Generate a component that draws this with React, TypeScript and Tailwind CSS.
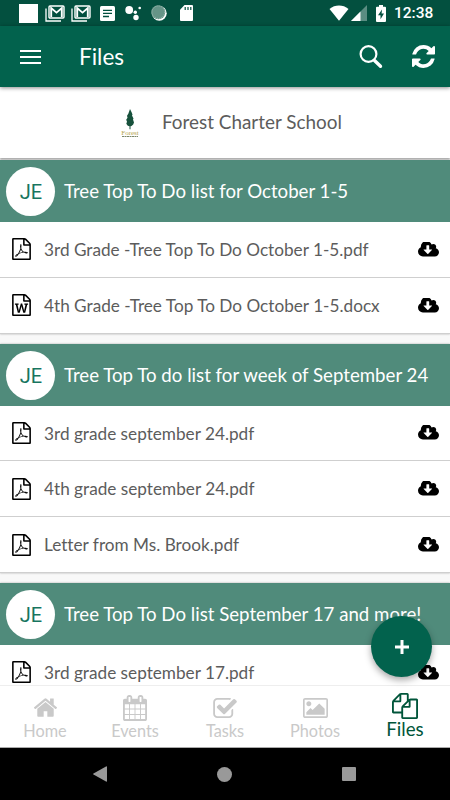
import type { ReactNode } from 'react'

type FileKind = 'pdf' | 'word'

type FileItem = {
  name: string
  kind: FileKind
}

type FileGroup = {
  title: string
  initials: string
  files: FileItem[]
}

const groups: FileGroup[] = [
  {
    title: 'Tree Top To Do list for October 1-5',
    initials: 'JE',
    files: [
      { name: '3rd Grade -Tree Top To Do October 1-5.pdf', kind: 'pdf' },
      { name: '4th Grade -Tree Top To Do October 1-5.docx', kind: 'word' },
    ],
  },
  {
    title: 'Tree Top To do list for week of September 24',
    initials: 'JE',
    files: [
      { name: '3rd grade september 24.pdf', kind: 'pdf' },
      { name: '4th grade september 24.pdf', kind: 'pdf' },
      { name: 'Letter from Ms. Brook.pdf', kind: 'pdf' },
    ],
  },
  {
    title: 'Tree Top To Do list September 17 and more!',
    initials: 'JE',
    files: [{ name: '3rd grade september 17.pdf', kind: 'pdf' }],
  },
]

const PAGE_OUTLINE =
  'M1596 380q28 28 48 76t20 88v1152q0 40-28 68t-68 28h-1344q-40 0-68-28t-28-68v-1600q0-40 28-68t68-28h896q40 0 88 20t76 48zm-444-244v376h376q-10-29-22-41l-313-313q-12-12-41-22zm384 1528v-1024h-416q-40 0-68-28t-28-68v-416h-768v1536h1280z'

const paths = {
  pdf:
    PAGE_OUTLINE +
    'm-514-593q33 26 84 56 59-7 117-7 147 0 177 49 16 22 2 52 0 1-1 2l-2 2v1q-6 38-71 38-48 0-115-20t-130-53q-221 24-392 83-153 262-242 262-15 0-28-7l-24-12q-1-1-6-5-10-10-6-36 9-40 56-91.5t132-96.5q14-9 23 6 2 2 2 4 52-85 107-197 68-136 104-262-24-82-30.5-159.5t6.5-127.5q11-40 42-40h22q23 0 35 15 18 21 9 68-2 6-4 8 1 3 1 8v30q-2 123-14 192 55 164 146 238zm-576 411q52-24 137-158-51 40-87.5 84t-49.5 74zm398-920q-15 42-2 132 1-7 7-44 0-3 7-43 1-4 4-8-1-1-1-2-1-2-1-3-1-22-13-36 0 1-1 2v2zm-124 661q135-54 284-81-2-1-13-9.5t-16-13.5q-76-67-127-176-27 86-83 197-30 56-45 83zm646-16q-24-24-140-24 76 28 124 28 14 0 18-1 0-1-2-3z',
  word:
    PAGE_OUTLINE +
    'm-1175-896v107h70l164 661h159l128-485q7-20 10-46 2-16 2-24h4l3 24q1 3 3.5 20t5.5 26l128 485h159l164-661h70v-107h-300v107h90l-99 438q-5 20-7 46l-2 21h-4l-3-21q-1-5-4-21t-5-25l-144-545h-114l-144 545q-2 9-4.5 24.5t-3.5 21.5l-4 21h-4l-2-21q-2-26-7-46l-99-438h90v-107h-300z',
  cloud:
    'M1280 928q0-14-9-23t-23-9h-224v-352q0-13-9.5-22.5t-22.5-9.5h-192q-13 0-22.5 9.5t-9.5 22.5v352h-224q-13 0-22.5 9.5t-9.5 22.5q0 14 9 23l352 352q9 9 23 9t23-9l351-351q10-12 10-24zm640 224q0 159-112.5 271.5t-271.5 112.5h-1088q-185 0-316.5-131.5t-131.5-316.5q0-130 70-240t188-165q-2-30-2-43 0-212 150-362t362-150q156 0 285.5 87t188.5 231q71-62 166-62 106 0 181 75t75 181q0 76-41 138 130 31 213.5 135.5t83.5 238.5z',
  refresh:
    'M1639 1056q0 5-1 7-64 268-268 434.5t-478 166.5q-146 0-282.5-55t-243.5-157l-129 129q-19 19-45 19t-45-19-19-45v-448q0-26 19-45t45-19h448q26 0 45 19t19 45-19 45l-137 137q71 66 161 102t187 36q134 0 250-65t186-179q11-17 53-117 8-23 30-23h192q13 0 22.5 9.5t9.5 22.5zm25-800v448q0 26-19 45t-45 19h-448q-26 0-45-19t-19-45 19-45l138-138q-148-137-349-137-134 0-250 65t-186 179q-11 17-53 117-8 23-30 23h-199q-13 0-22.5-9.5t-9.5-22.5v-7q65-268 270-434.5t480-166.5q146 0 284 55.5t245 156.5l130-129q19-19 45-19t45 19 19 45z',
  home:
    'M1472 992v480q0 26-19 45t-45 19h-384v-384h-256v384h-384q-26 0-45-19t-19-45v-480q0-1 .5-3t.5-3l575-474 575 474q1 2 1 6zm223-69l-62 74q-8 9-21 11h-3q-13 0-21-7l-692-577-692 577q-12 8-24 7-13-2-21-11l-62-74q-8-10-7-23.5t11-21.5l719-599q32-26 76-26t76 26l244 204v-195q0-14 9-23t23-9h192q14 0 23 9t9 23v408l219 182q10 8 11 21.5t-7 23.5z',
  calendar:
    'M192 1664h288v-288h-288v288zm352 0h320v-288h-320v288zm-352-352h288v-320h-288v320zm352 0h320v-320h-320v320zm-352-384h288v-288h-288v288zm736 736h320v-288h-320v288zm-384-736h320v-288h-320v288zm768 736h288v-288h-288v288zm-384-352h320v-320h-320v320zm-352-864v-288q0-13-9.5-22.5t-22.5-9.5h-64q-13 0-22.5 9.5t-9.5 22.5v288q0 13 9.5 22.5t22.5 9.5h64q13 0 22.5-9.5t9.5-22.5zm736 864h288v-320h-288v320zm-384-384h320v-288h-320v288zm384 0h288v-288h-288v288zm32-480v-288q0-13-9.5-22.5t-22.5-9.5h-64q-13 0-22.5 9.5t-9.5 22.5v288q0 13 9.5 22.5t22.5 9.5h64q13 0 22.5-9.5t9.5-22.5zm384-64v1280q0 52-38 90t-90 38h-1408q-52 0-90-38t-38-90v-1280q0-52 38-90t90-38h128v-96q0-66 47-113t113-47h64q66 0 113 47t47 113v96h384v-96q0-66 47-113t113-47h64q66 0 113 47t47 113v96h128q52 0 90 38t38 90z',
  check:
    'M1472 930v318q0 119-84.5 203.5t-203.5 84.5h-832q-119 0-203.5-84.5t-84.5-203.5v-832q0-119 84.5-203.5t203.5-84.5h832q63 0 117 25 15 7 18 23 3 17-9 29l-49 49q-10 10-23 10-3 0-9-2-23-6-45-6h-832q-66 0-113 47t-47 113v832q0 66 47 113t113 47h832q66 0 113-47t47-113v-254q0-13 9-22l64-64q10-10 23-10 6 0 12 3 20 8 20 29zm231-489l-814 814q-24 24-57 24t-57-24l-430-430q-24-24-24-57t24-57l110-110q24-24 57-24t57 24l263 263 647-647q24-24 57-24t57 24l110 110q24 24 24 57t-24 57z',
  photo:
    'M576 576q0 80-56 136t-136 56-136-56-56-136 56-136 136-56 136 56 56 136zm1024 384v448h-1408v-192l320-320 160 160 512-512zm96-704h-1600q-13 0-22.5 9.5t-9.5 22.5v1216q0 13 9.5 22.5t22.5 9.5h1600q13 0 22.5-9.5t9.5-22.5v-1216q0-13-9.5-22.5t-22.5-9.5zm160 32v1216q0 66-47 113t-113 47h-1600q-66 0-113-47t-47-113v-1216q0-66 47-113t113-47h1600q66 0 113 47t47 113z',
  files:
    'M1696 384q40 0 68 28t28 68v1216q0 40-28 68t-68 28h-960q-40 0-68-28t-28-68v-288h-544q-40 0-68-28t-28-68v-672q0-40 20-88t48-76l408-408q28-28 76-48t88-20h416q40 0 68 28t28 68v328q68-40 128-40h416zm-544 213l-299 299h299v-299zm-640-384l-299 299h299v-299zm196 647l316-316v-416h-384v416q0 40-28 68t-68 28h-416v640h512v-256q0-40 20-88t48-76zm956 804v-1152h-384v416q0 40-28 68t-68 28h-416v640h896z',
}

function Icon({ d, box = '0 0 1792 1792', className }: { d: string; box?: string; className: string }) {
  return (
    <svg viewBox={box} className={className} fill="currentColor">
      <path d={d} />
    </svg>
  )
}

function MailIcon() {
  return (
    <svg viewBox="0 0 20 17" className="h-[17px] w-5" fill="none" stroke="white">
      <path d="M1 3.5V16h15" strokeWidth="1.3" />
      <rect x="4" y="1" width="15" height="12" rx="1" strokeWidth="1.4" />
      <path d="M6.2 12V3l5.3 4.6L16.8 3v9" strokeWidth="1.9" />
    </svg>
  )
}

function StatusBar() {
  return (
    <div className="flex h-[26px] shrink-0 items-center bg-[#03503f] pl-[19px] text-white">
      <div className="size-[19px] bg-white" />
      <div className="ml-[7px]"><MailIcon /></div>
      <div className="ml-[6px]"><MailIcon /></div>
      <svg viewBox="0 0 15 15" className="ml-[9px] size-[15px]">
        <rect width="15" height="15" rx="1.5" fill="white" />
        <path d="M3 4.3h9M3 7.4h9M3 10.5h6" stroke="#03503f" strokeWidth="1.3" />
      </svg>
      <svg viewBox="0 0 16 16" className="ml-[10px] size-4" fill="white">
        <circle cx="4.2" cy="5" r="3.9" />
        <circle cx="10.3" cy="7.2" r="1.7" />
        <circle cx="14.7" cy="3" r="1.3" />
        <circle cx="11" cy="12.5" r="2.7" />
      </svg>
      <svg viewBox="0 0 16 16" className="ml-[10px] size-4">
        <circle cx="8.3" cy="8.3" r="7.4" fill="white" />
        <circle cx="7.3" cy="7.2" r="7" fill="#659487" />
        <circle cx="7.3" cy="7.2" r="6.3" fill="none" stroke="#a5c2b9" strokeWidth="1" strokeDasharray="1 1" />
      </svg>
      <svg viewBox="0 0 13 16" className="ml-[13px] h-4 w-[13px]">
        <path d="M4.5 0H12a1 1 0 0 1 1 1v14a1 1 0 0 1-1 1H1a1 1 0 0 1-1-1V4.8z" fill="white" />
        <path d="M5.2 2v3M8 2v3M10.8 2v3" stroke="#03503f" strokeWidth="1.2" />
      </svg>
      <svg viewBox="0 0 20 16" className="ml-[136px] h-4 w-5">
        <path d="M.5 4C6-.6 14-.6 19.5 4L10 15.8z" fill="white" />
      </svg>
      <svg viewBox="0 0 16 16" className="ml-[2px] size-4">
        <path d="M16 0v16H0z" fill="white" fillOpacity=".35" />
        <path d="M9.5 6.5V16H0z" fill="white" />
      </svg>
      <svg viewBox="0 0 10 17" className="ml-[9px] h-[17px] w-[10px]">
        <path d="M3 0h4v1.7h2q1 0 1 1V16q0 1-1 1H1q-1 0-1-1V2.7q0-1 1-1h2z" fill="white" />
        <path d="M6 4.5L2 10.3h2.5v4L8 8.5H5.6z" fill="#03503f" />
      </svg>
      <span className="ml-[8px] pt-[2px] font-[Roboto] text-[15.5px] font-medium leading-none">12:38</span>
    </div>
  )
}

function Header() {
  return (
    <header className="relative z-10 flex h-[61px] shrink-0 items-center bg-[#02624d] pl-5 pr-[15px] text-white shadow-[0_1px_4px_rgba(0,0,0,0.45)]">
      <div className="flex w-[21px] flex-col gap-[4px]">
        <div className="h-[2px] bg-white" />
        <div className="h-[2px] bg-white" />
        <div className="h-[2px] bg-white" />
      </div>
      <h1 className="ml-[38px] pt-px text-[22.5px]">Files</h1>
      <svg viewBox="0 0 24 24" className="ml-auto size-6" fill="none" stroke="white">
        <circle cx="9.5" cy="9" r="7.9" strokeWidth="2.2" />
        <path d="M15.5 15.5l6 5.8" strokeWidth="3.4" strokeLinecap="round" />
      </svg>
      <Icon d={paths.refresh} box="128 128 1536 1536" className="ml-[29px] size-[23px]" />
    </header>
  )
}

function SchoolLogo() {
  return (
    <svg viewBox="0 0 20 30" className="h-[30px] w-5 overflow-visible">
      <path d="M10 1l1.5 3 1 2.5-.5 1 1.5 3-.5 1 1 3-.8 2-1.7 1.5-1 .2v3H9.5v-3l-1.7-.5-1.5-2 .7-2-.8-2 1.3-2-.5-2 1.3-2z" fill="#17513c" />
      <text x="10" y="26.5" textAnchor="middle" className="font-['Liberation_Serif'] text-[7px]" fill="#b5a44d">Forest</text>
      <path d="M2 28.500h16" stroke="#7b8668" strokeWidth="1" strokeDasharray="2 .5" />
    </svg>
  )
}

function FileRow({ file }: { file: FileItem }) {
  return (
    <div className="flex h-[55.8px] items-center border-b border-[#cfcfcf] bg-white pl-3 pr-[11px]">
      <Icon d={paths[file.kind]} box="128 0 1536 1792" className="h-[22px] w-[19px] text-black" />
      <span className="ml-[13px] flex-1 whitespace-nowrap pt-px text-[17.2px] text-[#5c5c5c]">{file.name}</span>
      <Icon d={paths.cloud} box="0 256 1920 1280" className="h-[15px] w-[21px] text-black" />
    </div>
  )
}

function GroupCard({ group }: { group: FileGroup }) {
  return (
    <section className="mb-[10px] shadow-[0_0_2px_rgba(0,0,0,0.3)]">
      <div className="flex h-[62px] items-center bg-[#508b7b] pl-[6px]">
        <div className="mt-px flex size-[49px] items-center justify-center rounded-full bg-white pl-px pt-px font-[Roboto] text-[20px] text-[#187560]">
          {group.initials}
        </div>
        <h2 className="ml-[9px] whitespace-nowrap text-[18.67px] text-white">{group.title}</h2>
      </div>
      {group.files.map(file => (
        <FileRow key={file.name} file={file} />
      ))}
    </section>
  )
}

function Tab({ label, active, children }: { label: string; active?: boolean; children: ReactNode }) {
  return (
    <div className={`flex w-[90px] flex-col items-center ${active ? 'text-[#00553a]' : 'text-[#c9c9c9]'}`}>
      <div className={`flex items-center ${active ? 'h-[33px] pt-[7px]' : 'h-[35px] pt-[8px]'}`}>{children}</div>
      <span className={`leading-[20px] ${active ? 'text-[18.7px]' : 'text-[16.3px]'}`}>{label}</span>
    </div>
  )
}

function TabBar() {
  return (
    <nav className="flex h-[63px] shrink-0 border-t border-b border-t-[#eee] border-b-[#aaa] bg-white">
      <Tab label="Home">
        <Icon d={paths.home} box="90 253 1612 1283" className="h-[19px] w-[23px]" />
      </Tab>
      <Tab label="Events">
        <Icon d={paths.calendar} box="64 0 1664 1792" className="h-[26px] w-6" />
      </Tab>
      <Tab label="Tasks">
        <Icon d={paths.check} box="64 128 1664 1408" className="h-5 w-6" />
      </Tab>
      <Tab label="Photos">
        <Icon d={paths.photo} box="-64 128 1920 1536" className="h-5 w-[25px]" />
      </Tab>
      <Tab label="Files" active>
        <Icon d={paths.files} className="size-[26px]" />
      </Tab>
    </nav>
  )
}

function SystemNav() {
  return (
    <div className="flex h-[52px] shrink-0 items-center justify-between bg-black pl-[93px] pr-[94px] text-[#999]">
      <svg viewBox="0 0 14 16" className="h-4 w-[14px]" fill="currentColor">
        <path d="M13 .5q1-.5 1 .5v14q0 1-1 .5L.5 8.5q-.8-.5 0-1z" />
      </svg>
      <div className="size-[15px] rounded-full bg-[#999]" />
      <div className="size-[14px] rounded-[1px] bg-[#999]" />
    </div>
  )
}

export default function App() {
  return (
    <div className="relative flex h-[800px] w-[450px] flex-col overflow-hidden bg-[#f8f8f8] font-[Lato,sans-serif] [font-variant-ligatures:none]">
      <StatusBar />
      <Header />
      <main className="min-h-0 flex-1 overflow-hidden">
        <div className="mb-[2px] flex h-[71px] items-center bg-white pl-[120px] shadow-[0_1px_2px_rgba(0,0,0,0.4)]">
          <SchoolLogo />
          <span className="ml-[22px] text-[18.9px] text-[#5c5c5c]">Forest Charter School</span>
        </div>
        {groups.map(group => (
          <GroupCard key={group.title} group={group} />
        ))}
      </main>
      <TabBar />
      <SystemNav />
      <button
        aria-label="Add file"
        className="absolute left-[371px] top-[616px] flex size-[61px] items-center justify-center rounded-full bg-[#02624d] shadow-[0_3px_7px_rgba(0,0,0,0.35)]"
      >
        <svg viewBox="0 0 14 14" className="size-[14px]" stroke="white" strokeWidth="3">
          <path d="M7 0v14M0 7h14" />
        </svg>
      </button>
    </div>
  )
}
